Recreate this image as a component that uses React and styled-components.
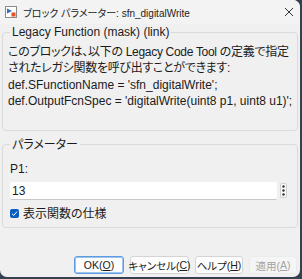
import React from 'react'
import styled, { createGlobalStyle } from 'styled-components'

const GlobalStyle = createGlobalStyle`
  html, body {
    margin: 0;
    padding: 0;
    background: #34414f;
  }
  body {
    width: 302px;
    height: 279px;
    overflow: hidden;
    font-family: 'Liberation Sans', 'Noto Sans CJK JP', sans-serif;
    font-feature-settings: 'palt';
    color: #1b1b1b;
  }
`

const BlockIcon = () => (
  <svg width="12" height="12" viewBox="0 0 12 12">
    <rect x="0.5" y="0.5" width="11" height="11" fill="#fff" stroke="#8a8a8a" />
    <path d="M2 2.5 L7 5 L2 7.5 Z" fill="#2a6fc0" />
    <rect x="6.5" y="6.5" width="4" height="4" fill="#e0502a" />
  </svg>
)

const CloseIcon = () => (
  <svg width="10" height="10" viewBox="0 0 10 10">
    <path d="M1 1 L9 9 M9 1 L1 9" stroke="#333" strokeWidth="1" />
  </svg>
)

const DotsIcon = () => (
  <svg width="3" height="11" viewBox="0 0 3 11">
    <circle cx="1.5" cy="1.5" r="1.2" fill="#333" />
    <circle cx="1.5" cy="5.5" r="1.2" fill="#333" />
    <circle cx="1.5" cy="9.5" r="1.2" fill="#333" />
  </svg>
)

const CheckIcon = () => (
  <svg width="7" height="7" viewBox="0 0 7 7">
    <path d="M1 3.7 L2.8 5.4 L6 1.6" stroke="#fff" strokeWidth="1" fill="none" />
  </svg>
)

export default function App() {
  return (
    <>
      <GlobalStyle />
      <Window>
        <TitleBar>
          <BlockIcon />
          <Title>ブロック パラメーター: sfn_digitalWrite</Title>
          <CloseButton>
            <CloseIcon />
          </CloseButton>
        </TitleBar>
        <Content>
          <Group>
            <Legend>Legacy Function (mask) (link)</Legend>
            <Description>
              <Sentence>
                このブロックは、以下の Legacy Code Tool
                の定義で指定されたレガシ関数を呼び出すことができます:
              </Sentence>
              <CodeLine>def.SFunctionName = 'sfn_digitalWrite';</CodeLine>
              <CodeLine>def.OutputFcnSpec = 'digitalWrite(uint8 p1, uint8 u1)';</CodeLine>
            </Description>
          </Group>
          <Group $spaced>
            <Legend>パラメーター</Legend>
            <FieldLabel>P1:</FieldLabel>
            <FieldRow>
              <TextInput>13</TextInput>
              <DotsButton>
                <DotsIcon />
              </DotsButton>
            </FieldRow>
            <CheckRow>
              <CheckBox>
                <CheckIcon />
              </CheckBox>
              <span>表示関数の仕様</span>
            </CheckRow>
          </Group>
        </Content>
        <ButtonRow>
          <Button $w={50} $primary>
            OK(<u>O</u>)
          </Button>
          <Button $w={59}>
            キャンセル(<u>C</u>)
          </Button>
          <Button $w={48}>
            ヘルプ(<u>H</u>)
          </Button>
          <Button $w={48} $disabled>
            適用(<u>A</u>)
          </Button>
        </ButtonRow>
      </Window>
    </>
  )
}

const Window = styled.div`
  width: 300px;
  height: 277px;
  background: #f0f0f0;
  border-radius: 0 7px 7px 7px;
  display: flex;
  flex-direction: column;
  overflow: hidden;
`

const TitleBar = styled.div`
  height: 24px;
  flex: none;
  display: flex;
  align-items: center;
  gap: 6px;
  padding-left: 5px;
  background: #f3f3f3;
`

const Title = styled.div`
  flex: 1;
  font-size: 10px;
  color: #222;
  white-space: nowrap;
`

const CloseButton = styled.div`
  width: 22px;
  display: flex;
  justify-content: center;
  align-items: center;
`

const Content = styled.div`
  padding: 0 2px;
  display: flex;
  flex-direction: column;
`

const Group = styled.fieldset`
  margin: ${p => (p.$spaced ? '6px' : '0')} 0 0 0;
  padding: ${p => (p.$spaced ? '8px' : '4px')} ${p => (p.$spaced ? '7px' : '1px')}
    ${p => (p.$spaced ? '5px' : '20px')} 5px;
  border: 1px solid #dadada;
  border-radius: 4px;
  min-width: 0;
`

const Legend = styled.legend`
  margin-left: 2px;
  padding: 0 2px;
  font-size: 12px;
  line-height: 16px;
  color: #1b1b1b;
`

const Description = styled.div`
  font-size: 12px;
  line-height: 16.4px;
`

const Sentence = styled.div`
  letter-spacing: -0.3px;
  line-break: anywhere;
`

const CodeLine = styled.div`
  white-space: nowrap;
`

const FieldLabel = styled.div`
  font-size: 12px;
  line-height: 16px;
  padding-left: 2px;
`

const FieldRow = styled.div`
  display: flex;
  align-items: center;
  gap: 3px;
  margin-top: 5px;
  padding-left: 2px;
`

const TextInput = styled.div`
  flex: 1;
  height: 18px;
  box-sizing: border-box;
  background: #fff;
  border-bottom: 1px solid #c8c8c8;
  border-radius: 2px;
  font-size: 12px;
  line-height: 18px;
  padding-left: 2px;
`

const DotsButton = styled.div`
  width: 7px;
  height: 15px;
  box-sizing: border-box;
  border: 1px solid #d0d0d0;
  border-radius: 2px;
  background: #fafafa;
  display: flex;
  align-items: center;
  justify-content: center;
  margin-right: 3px;
`

const CheckRow = styled.div`
  display: flex;
  align-items: center;
  gap: 4px;
  margin-top: 6px;
  font-size: 12px;
  line-height: 16px;
  padding-left: 2px;
`

const CheckBox = styled.div`
  width: 9px;
  height: 9px;
  border-radius: 2px;
  background: #0a5cc0;
  display: flex;
  align-items: center;
  justify-content: center;
`

const ButtonRow = styled.div`
  margin-top: auto;
  display: flex;
  justify-content: flex-end;
  gap: 6px;
  padding: 0 3px 3px 0;
`

const Button = styled.div`
  width: ${p => p.$w}px;
  height: 18px;
  box-sizing: border-box;
  display: flex;
  align-items: center;
  justify-content: center;
  font-size: 10.5px;
  white-space: nowrap;
  border-radius: 3px;
  background: ${p => (p.$disabled ? '#f5f5f5' : '#fdfdfd')};
  color: ${p => (p.$disabled ? '#a3a3a3' : '#1b1b1b')};
  border: 1px solid
    ${p => (p.$primary ? '#5e9ce0' : p.$disabled ? '#ececec' : '#d4d4d4')};
  box-shadow: ${p => (p.$primary ? 'inset 0 0 0 1px #9cc3ee' : 'none')};
  u {
    text-underline-offset: 1px;
  }
`
